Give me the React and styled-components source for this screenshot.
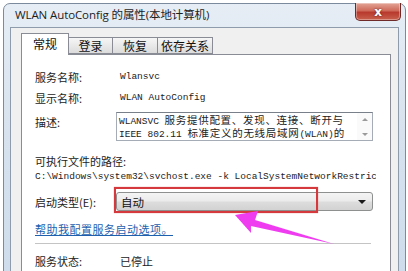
import React from 'react';
import styled, { createGlobalStyle } from 'styled-components';

const GlobalStyle = createGlobalStyle`
  html, body {
    margin: 0;
    padding: 0;
    background: #ffffff;
    overflow: hidden;
  }
  body {
    font-family: "Noto Sans CJK SC", "Noto Sans", sans-serif;
  }
`;

const Page = styled.div`
  position: relative;
  width: 408px;
  height: 271px;
  overflow: hidden;
`;

const Window = styled.div`
  margin: 3px 2px 0 3px;
  height: 320px;
  border: 1px solid #7b8a9c;
  border-radius: 7px 7px 0 0;
  background: linear-gradient(180deg, #e6edf5 0%, #d7e2ee 40%, #cbdaea 100%);
  display: flex;
  flex-direction: column;
`;

const TitleBar = styled.div`
  height: 23px;
  display: flex;
  align-items: flex-start;
  justify-content: space-between;
  padding-left: 11px;
`;

const Title = styled.div`
  font-family: "Open Sans", "Noto Sans CJK SC", sans-serif;
  font-size: 11.5px;
  color: #1d1d1d;
  line-height: 22px;
  letter-spacing: -0.1px;
`;

const CloseButton = styled.div`
  width: 44px;
  height: 17px;
  margin-top: -1px;
  margin-right: 4px;
  border: 1px solid #6e2a28;
  border-top: none;
  border-radius: 0 0 5px 5px;
  background: linear-gradient(180deg, #e3a596 0%, #cf6a5a 45%, #b83a2e 55%, #c9614d 100%);
  box-shadow: inset 0 0 0 1px rgba(255, 255, 255, 0.35);
  display: flex;
  align-items: center;
  justify-content: center;
  color: #ffffff;
  font-family: "DejaVu Sans", sans-serif;
  font-weight: bold;
  font-size: 12px;
  line-height: 12px;
  text-shadow: 0 0 2px #5a1010;
`;

const Client = styled.div`
  flex: 1;
  margin: 0 6px;
  border: 1px solid #8d9bad;
  background: #f0f0f0;
  padding: 5px 7px 0 10px;
  display: flex;
  flex-direction: column;
`;

const TabStrip = styled.div`
  display: flex;
  align-items: flex-end;
  height: 21px;
  position: relative;
  z-index: 1;
`;

const Tab = styled.div`
  box-sizing: border-box;
  width: ${(p) => p.$w}px;
  height: ${(p) => (p.$active ? 22 : 17)}px;
  margin-bottom: ${(p) => (p.$active ? -1 : 0)}px;
  margin-left: ${(p) => (p.$first ? 0 : -1)}px;
  border: 1px solid #898c95;
  border-bottom: ${(p) => (p.$active ? 'none' : '1px solid #898c95')};
  background: ${(p) =>
    p.$active ? '#ffffff' : 'linear-gradient(180deg, #f6f6f6 0%, #e9e9e9 50%, #dcdcdc 100%)'};
  font-size: 12px;
  color: #111;
  display: flex;
  align-items: ${(p) => (p.$active ? 'flex-start' : 'center')};
  padding-top: ${(p) => (p.$active ? 3 : 0)}px;
  justify-content: center;
  line-height: 14px;
`;

const Panel = styled.div`
  flex: 1;
  border: 1px solid #898c95;
  background: #ffffff;
  padding: 14px 17px 0 13px;
  display: flex;
  flex-direction: column;
`;

const Row = styled.div`
  display: flex;
  align-items: ${(p) => (p.$top ? 'flex-start' : 'center')};
  margin-top: ${(p) => p.$mt || 0}px;
  min-height: 16px;
`;

const Label = styled.div`
  width: 83px;
  flex-shrink: 0;
  font-size: 11px;
  color: #222;
  line-height: 16px;
  padding-top: ${(p) => p.$pt || 0}px;
`;

const Value = styled.div`
  font-family: "Liberation Mono", monospace;
  font-size: 9.5px;
  color: #222;
  padding-left: 2px;
  line-height: 16px;
`;

const CjkValue = styled.div`
  font-size: 11px;
  color: #222;
  padding-left: 2px;
  line-height: 16px;
`;

const TextBox = styled.div`
  flex: 1;
  height: 29px;
  margin-left: -2px;
  box-sizing: border-box;
  border: 1px solid #a5acb5;
  border-top-color: #7a8089;
  display: flex;
`;

const TextLines = styled.div`
  flex: 1;
  min-width: 0;
  padding: 0 0 0 2px;
  font-family: "Liberation Mono", monospace;
  font-size: 9.5px;
  color: #222;
  white-space: nowrap;
  overflow: hidden;
`;

const Line = styled.div`
  height: 13px;
  line-height: 13px;
`;

const Han = styled.span`
  font-family: "Noto Sans CJK SC", sans-serif;
  font-size: 10.5px;
  line-height: 13px;
  letter-spacing: 0.7px;
`;

const ScrollBar = styled.div`
  width: 15px;
  display: flex;
  flex-direction: column;
  justify-content: space-between;
  align-items: center;
  padding: 5px 0 4px;
  box-sizing: border-box;
  background: #fafafa;
`;

const Tri = styled.div`
  width: 0;
  height: 0;
  border-left: 3px solid transparent;
  border-right: 3px solid transparent;
  ${(p) => (p.$down ? 'border-top: 3px solid #9a9a9a;' : 'border-bottom: 3px solid #9a9a9a;')}
`;

const PathText = styled.div`
  font-family: "Liberation Mono", monospace;
  font-size: 9.5px;
  color: #222;
  line-height: 16px;
  white-space: nowrap;
  overflow: hidden;
  margin-right: -3px;
`;

const Combo = styled.div`
  position: relative;
  flex: 1;
  height: 19px;
  margin-left: -2px;
  box-sizing: border-box;
  border: 1px solid #8e8f8f;
  border-radius: 3px;
  background: linear-gradient(180deg, #f4f4f4 0%, #ebebeb 48%, #dddddd 52%, #d2d2d2 100%);
  display: flex;
  align-items: center;
  justify-content: space-between;
  padding: 0 6px 0 4px;
  font-size: 11.5px;
  color: #111;
`;

const ComboArrow = styled.div`
  width: 0;
  height: 0;
  border-left: 4px solid transparent;
  border-right: 4px solid transparent;
  border-top: 4px solid #1a1a1a;
`;

const Highlight = styled.div`
  position: absolute;
  left: -3px;
  top: -6px;
  width: 204px;
  height: 26px;
  box-sizing: border-box;
  border: 2px solid #d5393d;
  box-shadow: 0 0 1px #e08080;
  pointer-events: none;
`;

const HelpLink = styled.a`
  font-size: 11px;
  letter-spacing: 0.5px;
  color: #1e5fae;
  text-decoration: underline;
  line-height: 16px;
`;

const Separator = styled.div`
  height: 1px;
  background: #c4c4c4;
  margin-top: 6px;
  margin-right: 2px;
`;

const ArrowLayer = styled.svg`
  position: absolute;
  left: 0;
  top: 0;
  pointer-events: none;
`;

const tabs = [
  { name: '常规', w: 48, active: true },
  { name: '登录', w: 45 },
  { name: '恢复', w: 46 },
  { name: '依存关系', w: 56 },
];

export default function App() {
  return (
    <Page>
      <GlobalStyle />
      <Window>
        <TitleBar>
          <Title>WLAN AutoConfig 的属性(本地计算机)</Title>
          <CloseButton>x</CloseButton>
        </TitleBar>
        <Client>
          <TabStrip>
            {tabs.map((t, i) => (
              <Tab key={t.name} $w={t.w} $active={t.active} $first={i === 0}>
                {t.name}
              </Tab>
            ))}
          </TabStrip>
          <Panel>
            <Row>
              <Label>服务名称:</Label>
              <Value>Wlansvc</Value>
            </Row>
            <Row $mt={5}>
              <Label>显示名称:</Label>
              <Value>WLAN AutoConfig</Value>
            </Row>
            <Row $mt={6} $top>
              <Label $pt={2}>描述:</Label>
              <TextBox>
                <TextLines>
                  <Line>
                    WLANSVC <Han>服务提供配置、发现、连接、断开与</Han>
                  </Line>
                  <Line>
                    IEEE 802.11 <Han>标准定义的无线局域网</Han>(WLAN)<Han>的</Han>
                  </Line>
                </TextLines>
                <ScrollBar>
                  <Tri />
                  <Tri $down />
                </ScrollBar>
              </TextBox>
            </Row>
            <Row $mt={12}>
              <Label style={{ width: 'auto' }}>可执行文件的路径:</Label>
            </Row>
            <PathText>C:\Windows\system32\svchost.exe -k LocalSystemNetworkRestricted</PathText>
            <Row $mt={7}>
              <Label>启动类型(E):</Label>
              <Combo>
                <span>自动</span>
                <ComboArrow />
                <Highlight />
              </Combo>
            </Row>
            <Row $mt={10}>
              <HelpLink>帮助我配置服务启动选项。</HelpLink>
            </Row>
            <Separator />
            <Row $mt={9}>
              <Label>服务状态:</Label>
              <CjkValue>已停止</CjkValue>
            </Row>
          </Panel>
        </Client>
      </Window>
      <ArrowLayer width="408" height="271" viewBox="0 0 408 271">
        <polygon
          points="235,215 258,211 255,220 334,244 251,226 251,233"
          fill="#f03cf0"
        />
      </ArrowLayer>
    </Page>
  );
}
